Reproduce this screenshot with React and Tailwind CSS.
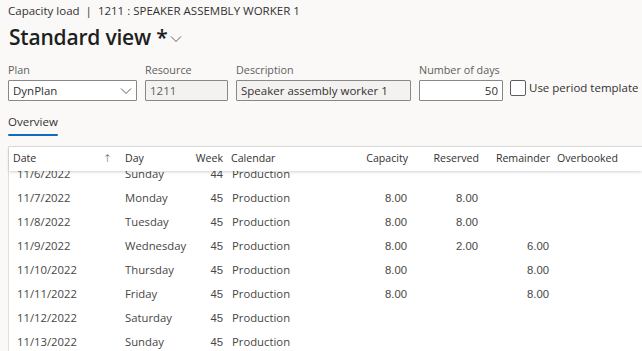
import React from 'react';

const rows = [
  { date: '11/6/2022', day: 'Sunday', week: 44, cal: 'Production' },
  { date: '11/7/2022', day: 'Monday', week: 45, cal: 'Production', cap: '8.00', res: '8.00' },
  { date: '11/8/2022', day: 'Tuesday', week: 45, cal: 'Production', cap: '8.00', res: '8.00' },
  { date: '11/9/2022', day: 'Wednesday', week: 45, cal: 'Production', cap: '8.00', res: '2.00', rem: '6.00' },
  { date: '11/10/2022', day: 'Thursday', week: 45, cal: 'Production', cap: '8.00', rem: '8.00' },
  { date: '11/11/2022', day: 'Friday', week: 45, cal: 'Production', cap: '8.00', rem: '8.00' },
  { date: '11/12/2022', day: 'Saturday', week: 45, cal: 'Production' },
  { date: '11/13/2022', day: 'Sunday', week: 45, cal: 'Production' },
];

const segoe = "font-['Segoe_UI','Open_Sans',sans-serif]";
const arial = "font-['Liberation_Sans',Arial,sans-serif]";

export default function App() {
  return (
    <div className={`w-[642px] h-[351px] overflow-hidden bg-[#faf9f8] text-[#323130] ${segoe}`}>
      <div className="pl-2 pt-[3px] text-[11.5px] leading-[16px] text-[#323130]">
        Capacity load <span className="mx-[3px]">|</span> 1211 : SPEAKER ASSEMBLY WORKER 1
      </div>

      <div className="flex items-center pl-[9px] mt-[3px] h-[30px]">
        <h1 className="text-[21px] font-semibold text-[#201f1e] leading-[28px] tracking-[-0.2px]">Standard view *</h1>
        <svg className="ml-[3px] mt-[4px]" width="12" height="8" viewBox="0 0 12 8">
          <path d="M1 1.5 L6 6.5 L11 1.5" stroke="#605e5c" strokeWidth="1" fill="none" />
        </svg>
      </div>

      {/* Filter fields */}
      <div className="flex items-end pl-2 mt-[10px] text-[10.8px]">
        <div className="w-[129px]">
          <div className="text-[#605e5c] leading-[16px] mb-[2px]">Plan</div>
          <div className="h-[21px] border border-[#8a8886] bg-white rounded-[1px] flex items-center justify-between pl-[4px] pr-[4px] text-[11.5px] text-[#323130]">
            <span>DynPlan</span>
            <svg width="12" height="8" viewBox="0 0 12 8">
              <path d="M1 1.5 L6 6.5 L11 1.5" stroke="#605e5c" strokeWidth="1" fill="none" />
            </svg>
          </div>
        </div>
        <div className="w-[83px] ml-[8px]">
          <div className="text-[#605e5c] leading-[16px] mb-[2px]">Resource</div>
          <div className="h-[21px] border border-[#8a8886] bg-[#f3f2f1] rounded-[1px] flex items-center pl-[4px] text-[11.5px] text-[#605e5c]">1211</div>
        </div>
        <div className="w-[175px] ml-[8px]">
          <div className="text-[#605e5c] leading-[16px] mb-[2px]">Description</div>
          <div className="h-[21px] border border-[#8a8886] bg-[#f3f2f1] rounded-[1px] flex items-center pl-[4px] text-[11.5px] text-[#323130] whitespace-nowrap overflow-hidden">Speaker assembly worker 1</div>
        </div>
        <div className="w-[84px] ml-[8px]">
          <div className="text-[#605e5c] leading-[16px] mb-[2px]">Number of days</div>
          <div className="h-[21px] border border-[#8a8886] bg-white rounded-[1px] flex items-center justify-end pr-[4px] text-[11.5px] text-[#323130]">50</div>
        </div>
        <div className="ml-[7px] flex items-center h-[21px] mb-[3px]">
          <div className="w-[16px] h-[16px] border border-[#605e5c] bg-white rounded-[2px]" />
          <span className="ml-[3px] text-[11.5px] text-[#323130] whitespace-nowrap">Use period template</span>
        </div>
      </div>

      {/* Tab */}
      <div className="pl-2 mt-[12px] text-[11.5px]">
        <div className="inline-flex flex-col">
          <span className="leading-[16px] text-[#323130]">Overview</span>
          <span className="h-[2px] bg-[#0f6cbd] mt-[4px] rounded-[1px]" />
        </div>
      </div>

      {/* Grid */}
      <div className="ml-2 mt-[10px] border-l border-t border-[#e1dfdd] bg-white h-[220px] flex flex-col">
        <div className="h-[24px] flex items-center text-[10.6px] text-[#323130] bg-white shadow-[0_1px_3px_rgba(0,0,0,0.18)] relative z-10 shrink-0">
          <div className="w-[115px] pl-[4px] flex justify-between pr-[12px]">
            <span>Date</span>
            <span className="text-[#605e5c] font-['DejaVu_Sans',sans-serif] font-light">↑</span>
          </div>
          <div className="w-[62px] pl-[1px]">Day</div>
          <div className="w-[37px] text-right">Week</div>
          <div className="w-[62px] pl-[8px]">Calendar</div>
          <div className="w-[123px] text-right">Capacity</div>
          <div className="w-[71px] text-right">Reserved</div>
          <div className="w-[71px] text-right">Remainder</div>
          <div className="pl-[7px]">Overbooked</div>
        </div>
        <div className="flex-1 overflow-hidden">
          <div className="-mt-[9px]">
            {rows.map((r) => (
              <div key={r.date} className="h-[24px] flex items-center text-[11.3px] text-[#484644]">
                <div className="w-[116px] pl-[8px]">{r.date}</div>
                <div className="w-[61px]">{r.day}</div>
                <div className={`w-[37px] text-right ${arial}`}>{r.week}</div>
                <div className="w-[62px] pl-[9px]">{r.cal}</div>
                <div className={`w-[123px] text-right pr-[1px] ${arial}`}>{r.cap}</div>
                <div className={`w-[71px] text-right pr-[1px] ${arial}`}>{r.res}</div>
                <div className={`w-[71px] text-right pr-[1px] ${arial}`}>{r.rem}</div>
              </div>
            ))}
          </div>
        </div>
      </div>
    </div>
  );
}
